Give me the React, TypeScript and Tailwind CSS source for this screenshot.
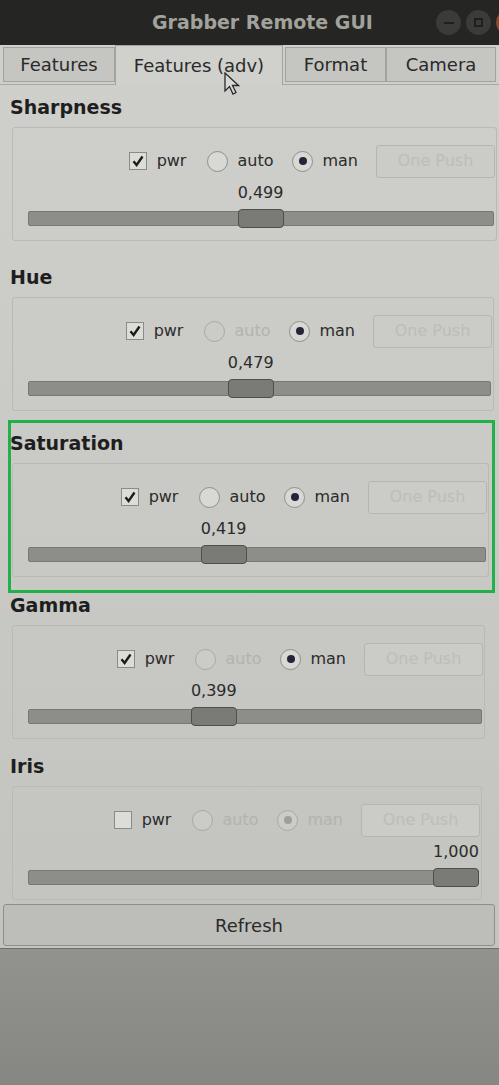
import React from "react";

const font = { fontFamily: "'DejaVu Sans', Verdana, sans-serif" };

const Check = ({ checked }: { checked: boolean }) => (
  <div className="w-[18px] h-[18px] border border-[#8a8a86] bg-[#dcdcd8] flex items-center justify-center">
    {checked && (
      <svg width="14" height="14" viewBox="0 0 14 14">
        <path d="M2.5 7.2 L5.6 11 L11.5 2.5" fill="none" stroke="#1c1c1c" strokeWidth="2.4" />
      </svg>
    )}
  </div>
);

const Radio = ({ on, disabled }: { on: boolean; disabled?: boolean }) => (
  <div
    className={`w-[21px] h-[21px] rounded-full border flex items-center justify-center ${
      disabled ? "border-[#a8a8a4] bg-[#cbcbc7]" : "border-[#8e8e8a] bg-[#d8d8d4]"
    }`}
  >
    {on && <div className={`w-[8px] h-[8px] rounded-full ${disabled ? "bg-[#9e9e9a]" : "bg-[#25253a]"}`} />}
  </div>
);

type SectionProps = {
  title: string;
  value: number;
  pwr?: boolean;
  autoEnabled?: boolean;
  disabled?: boolean;
  height: string;
  inset: string;
};

const Section = ({ title, value, pwr = true, autoEnabled = false, disabled = false, height, inset }: SectionProps) => {
  const label = value.toFixed(3).replace(".", ",");
  const pos = `calc(${value} * (100% - 46px))`;
  const autoOff = disabled || !autoEnabled;
  return (
    <section className={`flex flex-col ${height}`}>
      <h2 className="h-[28px] pl-[10px] leading-[28px] text-[19px] font-bold text-[#1e1e1e]">{title}</h2>
      <div className={`mt-[6px] ml-[12px] ${inset} border border-[#b9b9b5] rounded-[3px] pt-[16px] pb-[12px]`}>
        <div className="h-[34px] flex items-center justify-end pr-[1px] text-[16px]">
          <Check checked={pwr} />
          <span className="ml-[10px] text-[#2b2b2b]">pwr</span>
          <div className="ml-[21px]">
            <Radio on={false} disabled={autoOff} />
          </div>
          <span className={`ml-[9px] ${autoOff ? "text-[#b3b3af]" : "text-[#2b2b2b]"}`}>auto</span>
          <div className="ml-[19px]">
            <Radio on disabled={disabled} />
          </div>
          <span className={`ml-[9px] ${disabled ? "text-[#b3b3af]" : "text-[#2b2b2b]"}`}>man</span>
          <button className="ml-[18px] w-[119px] h-[33px] rounded-[3px] border border-[#b5b5b1] bg-[#cbcbc7] text-[16px] text-[#bdbdb9]">
            One Push
          </button>
        </div>
        <div className="ml-[15px] mr-[2px] mt-[5px] h-[20px] relative text-[16px] leading-[20px] text-[#2b2b2b]">
          <span className="absolute w-[46px] text-center" style={{ left: pos }}>
            {label}
          </span>
        </div>
        <div className="ml-[15px] mr-[2px] mt-[5px] h-[20px] relative flex items-center">
          <div className="w-full h-[15px] rounded-[2px] border border-[#777773] bg-[#8d8d89]" />
          <div
            className="absolute top-[1px] w-[46px] h-[19px] rounded-[4px] border border-[#4e4e4a] bg-[#7a7a76]"
            style={{ left: pos }}
          />
        </div>
      </div>
    </section>
  );
};

export default function App() {
  return (
    <div className="w-[499px] h-[1085px] overflow-hidden flex flex-col bg-[#8b8b87]" style={font}>
      {/* title bar */}
      <div className="h-[45px] shrink-0 bg-[#252523] flex items-center">
        <span className="ml-[152px] text-[19px] font-bold text-[#a2a29c]">Grabber Remote GUI</span>
        <div className="ml-auto flex items-center gap-[5px] -mr-[22px]">
          <div className="w-[25px] h-[25px] rounded-full bg-[#3b3b39] flex items-center justify-center">
            <div className="w-[10px] h-[2px] bg-[#1f1f1d]" />
          </div>
          <div className="w-[25px] h-[25px] rounded-full bg-[#3b3b39] flex items-center justify-center">
            <div className="w-[9px] h-[9px] border-[2px] border-[#1f1f1d]" />
          </div>
          <div className="w-[25px] h-[25px] rounded-full bg-[#8a4a2c]" />
        </div>
      </div>

      <div className="flex flex-col bg-gradient-to-b from-[#cfcfcb] to-[#c3c3bf] pb-[2px]">
        {/* tabs */}
        <div className="h-[40px] shrink-0 flex items-end px-[3px] text-[18px] text-[#2a2a2a] border-b border-[#a9a9a5]">
          <div className="w-[112px] h-[35px] mb-[2px] border border-[#a2a29e] bg-[#c5c5c1] flex items-center justify-center">
            Features
          </div>
          <div className="w-[168px] h-[40px] border border-b-0 border-[#a2a29e] bg-[#d0d0cc] flex items-center justify-center -mb-[1px] relative">
            Features (adv)
            <svg className="absolute left-[108px] top-[26px]" width="16" height="24" viewBox="0 0 16 24">
              <path
                d="M1 1 L1 19 L5.5 14.5 L9 22 L12 20.5 L8.5 13.5 L14.5 13.5 Z"
                fill="#d8d8d4"
                stroke="#2a2a2a"
                strokeWidth="1.3"
              />
            </svg>
          </div>
          <div className="w-[101px] h-[35px] mb-[2px] ml-[2px] border border-[#a2a29e] bg-[#c5c5c1] flex items-center justify-center">
            Format
          </div>
          <div className="w-[110px] h-[35px] mb-[2px] border border-[#a2a29e] bg-[#c5c5c1] flex items-center justify-center">
            Camera
          </div>
        </div>

        <div className="pt-[8px] flex flex-col">
          <Section title="Sharpness" value={0.499} autoEnabled height="h-[170px]" inset="mr-[2px]" />
          <Section title="Hue" value={0.479} height="h-[166px]" inset="mr-[5px]" />
          <div className="relative">
            <Section title="Saturation" value={0.419} autoEnabled height="h-[162px]" inset="mr-[10px]" />
            <div className="absolute -top-[9px] left-[8px] right-[4px] -bottom-[2px] border-[3px] border-[#22b04b] pointer-events-none" />
          </div>
          <Section title="Gamma" value={0.399} height="h-[161px]" inset="mr-[14px]" />
          <Section title="Iris" value={1} pwr={false} disabled height="h-[151px]" inset="mr-[17px]" />
        </div>

        <button className="mx-[3px] mt-[1px] w-[492px] h-[42px] shrink-0 rounded-[3px] border border-[#8e8e8a] bg-[#bdbdb9] text-[18px] text-[#2a2a2a]">
          Refresh
        </button>
      </div>

      <div className="flex-1 border-t border-[#6e6e6a] bg-gradient-to-b from-[#92928e] to-[#868682]" />
    </div>
  );
}
